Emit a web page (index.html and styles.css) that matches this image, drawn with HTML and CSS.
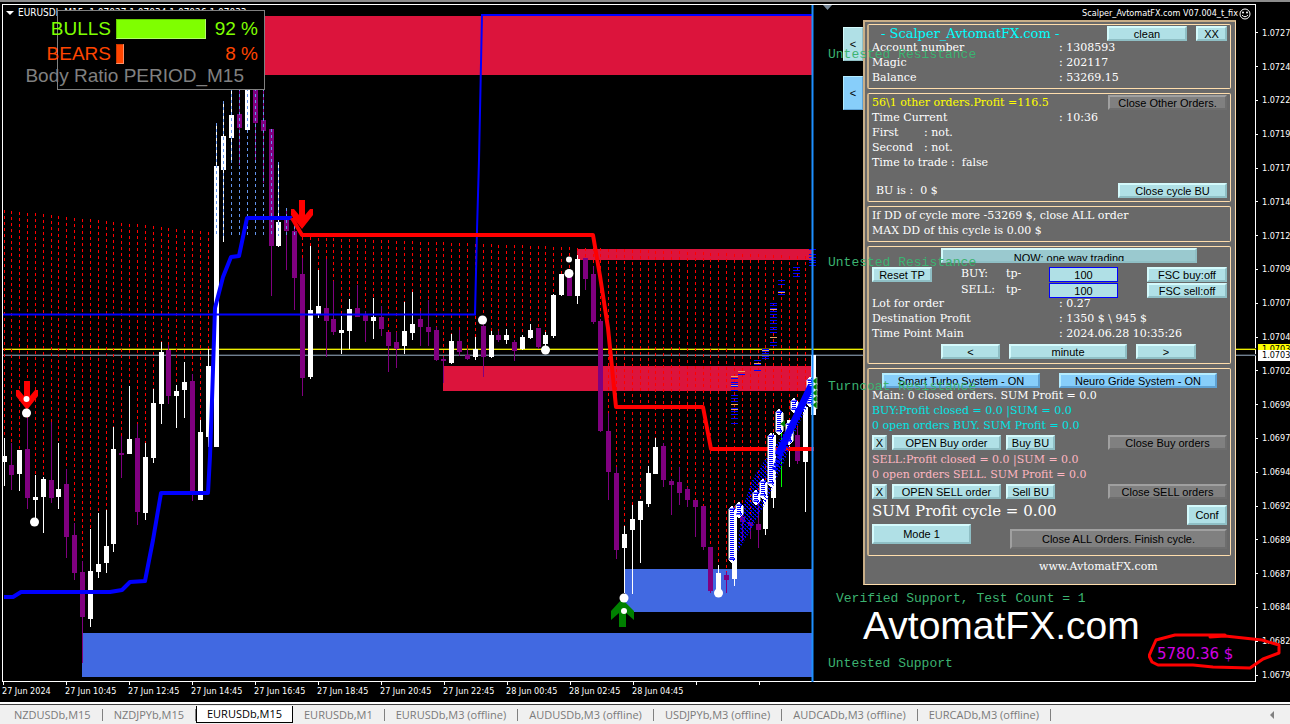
FILE: index.html
```html
<!DOCTYPE html>
<html lang="en">
<head>
<meta charset="utf-8">
<title>EURUSDb,M15</title>
<link rel="stylesheet" href="styles.css">
</head>
<body>
<main class="chart">
  <div class="plot"></div>
  <ol class="prices" id="prices"></ol>
  <ol class="times">
    <li>27 Jun 2024</li><li>27 Jun 10:45</li><li>27 Jun 12:45</li><li>27 Jun 14:45</li>
    <li>27 Jun 16:45</li><li>27 Jun 18:45</li><li>27 Jun 20:45</li><li>27 Jun 22:45</li>
    <li>28 Jun 00:45</li><li>28 Jun 02:45</li><li>28 Jun 04:45</li><li></li><li></li>
  </ol>
  <svg class="canvas" id="canvas" aria-hidden="true"></svg>

  <span class="tag tag-ask">1.07036</span>
  <span class="tag tag-bid">1.07032</span>

  <div class="symbol"><span class="symbol-arrow"></span>EURUSDb,M15&nbsp; 1.07027 1.07034 1.07026 1.07033</div>

  <section class="ratio">
    <div class="ratio-row bulls"><span class="ratio-name">BULLS</span><span class="bar"><span class="bar-fill" style="width:92%"></span></span><span class="ratio-value">92 %</span></div>
    <div class="ratio-row bears"><span class="ratio-name">BEARS</span><span class="bar"><span class="bar-fill" style="width:8%"></span></span><span class="ratio-value">8 %</span></div>
    <div class="ratio-caption">Body Ratio PERIOD_M15</div>
  </section>

  <div class="expert">Scalper_AvtomatFX.com V07.004_t_fix
    <svg width="12" height="12" viewBox="0 0 12 12"><circle cx="6" cy="6" r="5" fill="none" stroke="#fff"/><circle cx="4" cy="4.500" r="1" fill="#fff"/><circle cx="8" cy="4.500" r="1" fill="#fff"/><path d="M3 7q3 3.500 6 0" fill="none" stroke="#fff"/></svg>
  </div>

  <div class="side">
    <button class="btn side-btn">&lt;</button>
    <button class="btn blue side-btn">&lt;</button>
  </div>

  <section class="panel">
    <div class="group">
      <div class="head">
        <h1 class="title">- Scalper_AvtomatFX.com -</h1>
        <button class="btn w-clean">clean</button>
        <button class="btn w-xx">XX</button>
      </div>
      <dl class="facts">
        <dt>Account number</dt><dd>: 1308593</dd>
        <dt>Magic</dt><dd>: 202117</dd>
        <dt>Balance</dt><dd>: 53269.15</dd>
      </dl>
    </div>

    <div class="group">
      <div class="line">
        <p class="yellow">56\1 other orders.Profit =116.5</p>
        <button class="btn gray w-close">Close Other Orders.</button>
      </div>
      <dl class="facts"><dt>Time Current</dt><dd>: 10:36</dd></dl>
      <dl class="facts short">
        <dt>First</dt><dd>: not.</dd>
        <dt>Second</dt><dd>: not.</dd>
      </dl>
      <p>Time to trade :&nbsp; false</p>
      <div class="line bu">
        <p>BU is :&nbsp; 0 $</p>
        <button class="btn w-cycle">Close cycle BU</button>
      </div>
    </div>

    <div class="group">
      <p>If DD of cycle more -53269 $, close ALL order</p>
      <p>MAX DD of this cycle is 0.00 $</p>
    </div>

    <div class="group trading">
      <button class="btn now">NOW: one way trading</button>
      <div class="take">
        <button class="btn reset">Reset TP</button>
        <label for="buy-tp">BUY:</label><span>tp-</span>
        <input id="buy-tp" class="tp" value="100">
        <button class="btn fsc">FSC buy:off</button>
        <label class="sell" for="sell-tp">SELL:</label><span>tp-</span>
        <input id="sell-tp" class="tp" value="100">
        <button class="btn fsc">FSC sell:off</button>
      </div>
      <dl class="facts lot">
        <dt>Lot for order</dt><dd>: 0.27</dd>
        <dt>Destination Profit</dt><dd>: 1350 $ \ 945 $</dd>
        <dt>Time Point Main</dt><dd>: 2024.06.28 10:35:26</dd>
      </dl>
      <div class="stepper">
        <button class="btn">&lt;</button>
        <button class="btn">minute</button>
        <button class="btn">&gt;</button>
      </div>
    </div>

    <div class="group orders">
      <div class="systems">
        <button class="btn blue">Smart Turbo System - ON</button>
        <button class="btn blue">Neuro Gride System - ON</button>
      </div>
      <p>Main: 0 closed orders. SUM Profit = 0.0</p>
      <p class="cyan">BUY:Profit closed = 0.0 |SUM = 0.0</p>
      <p class="cyan">0 open orders BUY. SUM Profit = 0.0</p>
      <div class="actions">
        <button class="btn w-x">X</button>
        <button class="btn w-open">OPEN Buy order</button>
        <button class="btn w-bu">Buy BU</button>
        <button class="btn gray w-close">Close Buy orders</button>
      </div>
      <p class="pink">SELL:Profit closed = 0.0 |SUM = 0.0</p>
      <p class="pink">0 open orders SELL. SUM Profit = 0.0</p>
      <div class="actions">
        <button class="btn w-x">X</button>
        <button class="btn w-open">OPEN SELL order</button>
        <button class="btn w-bu">Sell BU</button>
        <button class="btn gray w-close">Close SELL orders</button>
      </div>
      <div class="finish">
        <div class="finish-left">
          <p class="sum">SUM Profit cycle = 0.00</p>
          <button class="btn mode">Mode 1</button>
        </div>
        <div class="finish-right">
          <button class="btn conf">Conf</button>
          <button class="btn gray all">Close ALL Orders. Finish cycle.</button>
        </div>
      </div>
    </div>
    <p class="site">www.AvtomatFX.com</p>
  </section>

  <span class="zone zone-1">Untested Resistance</span>
  <span class="zone zone-2">Untested Resistance</span>
  <span class="zone zone-3">Turncoat Resistance</span>
  <span class="zone zone-4">Verified Support, Test Count = 1</span>
  <span class="zone zone-5">Untested Support</span>
  <div class="brand">AvtomatFX.com</div>
  <div class="profit">5780.36 $</div>
  <svg class="mark" width="136" height="40" viewBox="1148 632 136 40" aria-hidden="true">
    <path d="M1226 636L1225 635L1175 635L1156 640L1152 649L1149 656L1152 662L1158 665L1193 665L1213 667L1250 668L1263 659L1279 653L1279 645L1262 640L1225 636L1210 637" fill="none" stroke="#f00" stroke-width="3" stroke-linejoin="round" stroke-linecap="round"/>
  </svg>
</main>

<nav class="tabs">
  <a class="tab" href="#">NZDUSDb,M15</a>
  <a class="tab" href="#">NZDJPYb,M15</a>
  <a class="tab active" href="#">EURUSDb,M15</a>
  <a class="tab" href="#">EURUSDb,M1</a>
  <a class="tab" href="#">EURUSDb,M3 (offline)</a>
  <a class="tab" href="#">AUDUSDb,M3 (offline)</a>
  <a class="tab" href="#">USDJPYb,M3 (offline)</a>
  <a class="tab" href="#">AUDCADb,M3 (offline)</a>
  <a class="tab" href="#">EURCADb,M3 (offline)</a>
  <span class="tabs-back"></span>
</nav>
<script src="chart.js"></script>
</body>
</html>
```
FILE: styles.css
```css
* { box-sizing: border-box; }
body {
  margin: 0;
  min-height: 100vh;
  display: flex;
  flex-direction: column;
  background: #000;
  color: #fff;
  overflow: hidden;
  font-family: "DejaVu Sans Condensed", "DejaVu Sans", sans-serif;
  font-size: 9px;
}
h1, p, dl, dd, ol { margin: 0; padding: 0; font-weight: normal; }
ol { list-style: none; }

.chart {
  position: relative;
  flex: 1;
  display: grid;
  grid-template: 1fr 20px / 1fr 34px;
  padding: 4px 0 0 2px;
  box-shadow: inset 0 2px #8c8c8c;
  overflow: hidden;
}
.plot { border: 1px solid #fff; }
.prices {
  grid-area: 1 / 2 / 3 / 3;
  display: flex;
  flex-direction: column;
  padding: 12px 0 10px;
  overflow: hidden;
}
.prices li { flex: 1; display: flex; align-items: center; gap: 4px; }
.prices li::before { content: ""; width: 2px; height: 1px; background: #fff; flex: none; }
.times { grid-area: 2 / 1; display: flex; }
.times li {
  width: 63px;
  padding-top: 2px;
  line-height: 14px;
  white-space: nowrap;
  background: linear-gradient(#fff, #fff) 1px 0 / 1px 3px no-repeat;
}
.canvas { position: absolute; inset: 0; width: 100%; height: 100%; }

.tag { position: absolute; left: 1258px; right: 0; padding-left: 4px; line-height: 11px; color: #000; overflow: hidden; }
.tag-ask { top: 344px; background: #ff0; }
.tag-bid { top: 350px; background: #fff; }

.symbol { position: absolute; left: 6px; top: 6px; display: flex; align-items: center; gap: 4px; font-size: 10px; line-height: 13px; white-space: nowrap; }
.symbol-arrow { border: 4px solid transparent; border-top-color: #fff; border-bottom: 0; }

.ratio {
  position: absolute;
  left: 57px;
  top: 10px;
  width: 208px;
  height: 80px;
  padding: 5px 6px 0 0;
  border: 1px solid #808080;
  background: #000;
  font: 19px/25px "Liberation Sans", Arial, sans-serif;
}
.ratio-row { display: flex; align-items: center; }
.ratio-name { width: 53px; display: flex; justify-content: flex-end; }
.bar { width: 98px; margin-left: 5px; height: 20px; }
.bar-fill { display: block; height: 100%; background: currentColor; box-shadow: inset -1px -1px rgba(255, 255, 255, .4), inset 1px 1px rgba(0, 0, 0, .2); }
.ratio-value { flex: 1; text-align: right; }
.bulls { color: #7fff00; }
.bears { color: #ff4500; }
.ratio-caption { color: #808080; width: 186px; display: flex; justify-content: flex-end; white-space: nowrap; line-height: 20px; }

.expert { position: absolute; right: 39px; top: 7px; display: flex; align-items: center; gap: 1px; font-size: 9px; line-height: 13px; }

.btn {
  display: block;
  height: 15px;
  padding: 0;
  border: 2px solid;
  border-color: #d4fafc #8fbfc5 #8fbfc5 #d4fafc;
  background: #b0e0e6;
  color: #000;
  font: 11px/12px "Liberation Sans", Arial, sans-serif;
  white-space: nowrap;
}
.btn.blue { background: #87cefa; border-color: #b4ecff #5fa2d4 #5fa2d4 #b4ecff; }
.btn.gray { background: #808080; border-color: #a0a0a0 #6e6e6e #6e6e6e #a0a0a0; }

.side { position: absolute; left: 843px; top: 27px; display: flex; flex-direction: column; gap: 15px; }
.side-btn { width: 20px; height: 34px; border-width: 1px; }

.panel {
  position: absolute;
  left: 863px;
  top: 20px;
  width: 373px;
  padding: 2px 4px 2px 2px;
  display: flex;
  flex-direction: column;
  gap: 4px;
  background: #696969;
  border: 2px solid #c8ae88;
  border-right: 1px solid #ffdead;
  border-bottom: 1px solid #ffdead;
  font: 11px/15px "DejaVu Serif", Georgia, serif;
}
.panel p { white-space: nowrap; }
.group { border: 1px solid #ffdead; border-left: 2px solid #c8ae88; border-radius: 2px; padding: 1px 3px 3px; }
.head { display: flex; height: 14px; gap: 9px; }
.title { flex: 1; padding-left: 9px; font-size: 13px; line-height: 15px; color: #0ff; white-space: nowrap; }
.w-clean { width: 80px; }
.w-xx { width: 31px; }
.facts { display: grid; grid-template-columns: 187px 1fr; }
.facts.short { grid-template-columns: 52px 1fr; }
.line { display: flex; justify-content: space-between; }
.yellow { color: #ff0; }
.w-close { width: 119px; }
.bu { margin-top: 13px; padding-left: 4px; }
.w-cycle { width: 109px; }
.now { width: 256px; margin: 0 auto 4px 69px; padding-top: 2px; background: #9ac9cf; overflow: hidden; }
.take { display: grid; grid-template-columns: 89px 45px 43px 69px 1fr; row-gap: 1px; line-height: 14px; }
.reset { width: 60px; }
.fsc { width: 80px; justify-self: end; }
.sell { grid-column: 2; }
.tp { width: 69px; height: 15px; padding: 0; border: 1px solid #00f; background: #b0e0e6; color: #000; font: 11px "Liberation Sans", Arial, sans-serif; text-align: center; }
.lot { margin-top: -2px; position: relative; }
.stepper { display: grid; grid-template-columns: 59px 118px 60px; gap: 9px; padding: 3px 0 0 69px; }
.trading { padding-bottom: 4px; }
.orders { padding-top: 4px; padding-bottom: 6px; }
.systems { display: flex; gap: 19px; padding-left: 10px; }
.systems .btn { width: 158px; }
.cyan { color: #00e5e5; }
.pink { color: #ffb6c1; }
.actions { display: flex; gap: 5px; margin: 2px 0; }
.actions .gray { margin-left: auto; }
.w-x { width: 15px; }
.w-open { width: 109px; }
.w-bu { width: 49px; }
.finish { display: flex; justify-content: space-between; }
.finish-left { width: 100px; }
.finish-right { display: flex; flex-direction: column; align-items: flex-end; gap: 4px; padding-top: 4px; }
.sum { font-size: 15px; line-height: 20px; }
.mode { width: 99px; height: 20px; margin-top: 3px; }
.conf { width: 40px; height: 20px; }
.all { width: 217px; height: 20px; }
.site { padding: 0 0 8px 172px; line-height: 14px; }

.zone { position: absolute; left: 828px; color: #3cb371; font: 13px/16px "Liberation Mono", "Courier New", monospace; white-space: nowrap; }
.zone-1 { top: 47px; }
.zone-2 { top: 255px; }
.zone-3 { top: 379px; }
.zone-4 { top: 591px; left: 836px; }
.zone-5 { top: 656px; }
.brand { position: absolute; left: 863px; top: 603px; font: 39px/45px "Liberation Sans", Arial, sans-serif; }
.profit { position: absolute; left: 1157px; top: 645px; color: #d000e0; font: 15px/18px "DejaVu Sans", Verdana, sans-serif; }
.mark { position: absolute; left: 1148px; top: 632px; }

.tabs { display: flex; align-items: stretch; height: 22px; padding: 2px 8px 1px 3px; background: #f0f0f0; border-top: 2px solid #fff; box-shadow: inset 0 1px #404040; }
.tab { display: flex; align-items: center; padding: 0 12px 0 11px; color: #7a7a7a; text-decoration: none; white-space: nowrap; font: 11px/14px "Open Sans", "Noto Sans", sans-serif; background: linear-gradient(#808080, #808080) right center / 1px 12px no-repeat; }
.tab.active { padding: 0 10px; background: #fff; color: #000; border: 1px solid #000; border-top: 0; }
.tabs-back { margin: auto 8px auto auto; border: 4px solid transparent; border-right-color: #808080; border-left: 0; }
```
FILE: chart.js
```js
const STEP = 7.855;
const xAt = i => 3.5 + i * STEP;

// Each bar: colour (w = rising, p = falling), high, low, body top, body bottom
const bars = `w438 486 456 462|p443 490 465 475|w450 491 450 474|p418 509 449 498|w475 522 497 500|w477 533 479 497
p422 503 480 498|w443 509 489 497|p469 558 484 537|p523 580 535 573|p561 663 572 617|w529 627 571 619
w513 578 564 572|w510 573 546 563|w427 552 449 544|p436 478 453 455|w386 454 439 454|p424 525 438 512
w443 520 457 513|w389 463 403 458|w342 424 352 404|p345 404 350 396|w385 428 391 396|w362 418 382 390
p374 501 381 492|w420 500 432 500|w349 447 366 437|w123 447 166 447|w101 242 136 170|w88 163 115 138
p88 165 114 128|w88 130 88 130|p88 163 88 123|p88 183 120 131|p129 296 129 246|w162 247 222 246
p208 270 218 231|p220 310 231 278|p258 396 274 378|w246 379 310 377|w270 318 306 314|p259 357 308 321
p281 335 319 332|w316 354 330 333|w299 349 309 331|p285 317 308 317|p311 342 315 321|w298 339 317 321
p306 336 317 329|p332 372 332 346|p332 368 342 349|w302 354 331 346|w292 340 324 333|p311 346 319 327
p300 346 327 332|p327 361 330 360|p357 383 359 361|w334 364 341 363|p330 356 341 352|p349 360 355 359
w337 360 349 357|p323 377 326 357|w331 358 335 357|p331 342 335 340|w329 344 335 340|p340 361 342 351
w335 350 337 349|w324 339 330 338|p328 349 328 347|w332 350 335 344|w294 338 295 336|w274 296 274 295
p277 296 277 296|w255 304 259 296|p258 290 258 279|p266 324 274 322|p319 432 321 431|p413 500 431 472
p467 559 473 550|w526 593 534 548|w505 594 519 530|w501 563 501 520|w466 507 473 504|w438 474 447 474
p443 487 446 480|p479 515 481 485|p467 505 482 493|p487 507 489 500|p500 537 500 507|p506 550 506 547
p547 593 547 591|w565 593 573 590|p572 593 575 580|w508 586 510 579|p510 541 517 522|p522 539 522 526
p502 548 524 530|w487 535 496 529|w433 508 435 498|g431 487 431 431|w420 467 420 432|p427 464 435 461
w400 512 407 462|w355 415 355 415`.split(/[|\n]/).map(s => [s[0], ...s.slice(1).split(' ').map(Number)]);

const colours = { w: '#fff', p: '#800080', g: '#0f0' };
const out = [];
const rect = (x, y, w, h, fill) => out.push(`<rect x="${x}" y="${y}" width="${w}" height="${h}" fill="${fill}"/>`);
const path = (d, stroke, width, extra = '') => out.push(`<path d="${d}" fill="none" stroke="${stroke}" stroke-width="${width}" ${extra}/>`);
const dot = (x, y, r) => out.push(`<circle cx="${x}" cy="${y}" r="${r}" fill="#fff"/>`);

out.push('<pattern id="mesh" width="4" height="4" patternUnits="userSpaceOnUse"><path d="M0 0h2v1h-2zM2 2h2v1h-2zM1 1h1v1h-1zM3 3h1v1h-1z" fill="#00f"/></pattern>');

// Support and resistance zones
rect(200, 16, 612, 59, '#dc143c');
rect(577, 249, 235, 11, '#dc143c');
rect(443, 366, 369, 25, '#dc143c');
rect(82, 633, 730, 44, '#4169e1');
rect(625, 569, 187, 43, '#4169e1');

// Ask and bid lines
rect(3, 348, 1253, 1, '#555500');
rect(3, 349, 1253, 1, '#eeee00');
rect(3, 354, 1253, 1, '#2c333a');
rect(3, 355, 1253, 1, '#708090');

bars.forEach(([c, hi, lo, top, bottom], i) => {
  const x = Math.round(xAt(i));
  const start = i < 27 ? 210 + i * 0.85 : 237 + (i - 38) * 0.3;
  if ((i < 27 || i > 37) && i < 103) {
    const end = i > 92 ? Math.min(hi, 520) : hi;
    path(`M${x + .5} ${Math.round(start)}V${end}`, '#f00', 1, 'stroke-dasharray="3 3"');
  }
  rect(x, hi, 1, lo - hi, colours[c]);
  rect(x - 2, top, 5, bottom - top, colours[c]);
});
for (let i = 27; i < 38; i++) path(`M${Math.round(xAt(i)) + .5} ${bars[i][1]}V236`, '#6495ed', 1, 'stroke-dasharray="3 3"');

// Indicator lines
path('M3 314.500H475L477 230L479 160L482 15H812', '#00f', 2);
path('M4 597H13L21 592H110L122 590L130 582L145 581L153 540L161 493H208L210 456L212 400L215 308L223 277L231 257L239 256L247 218H292', '#00f', 4, 'stroke-linejoin="round"');
path('M292 218L302 235H593L600 276L608 328L616 407H703L711 449H814', '#f00', 4, 'stroke-linejoin="round"');

// Price levels
const levels = {
  735: [376, 378, 382, 384, 386, 390, 395, 398, 401, 404, 408, 411, 414, 418, 423], 742: [371, 374],
  758: [360, 364, 370], 766: [349, 351, 353, 356, 358],
  774: [303, 305, 308, 311, 314, 317, 320, 323, 327, 329, 332, 337, 342, 345], 782: [280, 284, 291, 294],
  797: [267, 270, 273, 276], 813: [249, 254, 257, 260, 262, 265]
};
Object.entries(levels).forEach(([x, ys]) => ys.forEach(y => rect(x - 4, y, 7, 1, '#0000ff')));
[[735, 376], [735, 385], [735, 404], [735, 409], [742, 371], [758, 363], [766, 350], [774, 309], [774, 337], [782, 292]]
  .forEach(([x, y]) => rect(x - 4, y, 7, 1, '#f0a060'));

// Trade history: connecting lines, then columns of arrows
out.push('<path d="M737 553L742 510L752 480L770 452L790 425L812 380V396L796 430L784 462L768 498L752 528z" fill="url(#mesh)"/>');
const columns = [[732, 509, 560], [739, 505, 515], [756, 493, 502], [763, 482, 496], [771, 436, 484], [779, 412, 432], [789, 424, 442], [794, 401, 410], [810, 380, 404]];
columns.forEach(([x, a, b]) => {
  path(`M${x - 3} ${a}L${x} ${a - 3}L${x + 4} ${a + 1}V${b - 1}L${x} ${b + 3}L${x - 3} ${b}z`, '#fff', 1, 'style="fill:#fff"');
  path(`M${x} ${a}V${b}`, '#00f', 4, 'stroke-dasharray="1 1"');
  [a, b - 1].forEach(y => path(`M${x - 3} ${y}h6m-2 -2l2 2l-2 2`, '#00f', 1));
});
path('M778 455L811 386', '#00f', 7);
path('M774 470L806 396', '#00f', 5, 'stroke-dasharray="3 1"');
for (let y = 378; y < 408; y += 6) out.push(`<path d="M812 ${y + 3}l5 -4v8z" fill="#008000" stroke="#fff" stroke-width=".5"/>`);
out.push('<path d="M780 424l5 -4v7z" fill="#008000"/>');
path('M812.500 5V682', '#1e90ff', 2);

// Signal arrows and extremes
const down = (x, y) => out.push(`<path d="M${x - 3} ${y}h6v15l5 -6h3v6l-11 14l-11 -14v-6h3l5 6z" fill="#f00"/>`);
down(27, 381);
down(302, 200);
out.push('<path d="M622 599l12 12v9l-8 -7v14h-7v-14l-8 7v-9z" fill="#008000"/>');
[[26.5, 413, 4.5], [26.5, 399, 3], [34.5, 522, 4.5], [482.5, 320, 4.5], [545.5, 350, 4.5], [569, 259.5, 3], [569, 273.5, 4.5], [624, 598, 4.5], [624, 611, 3], [718.5, 593, 4.5]]
  .forEach(d => dot(...d));
out.push('<path d="M823 5h9l-4.500 5z" fill="#778899"/>');
document.getElementById('canvas').innerHTML = out.join('');

const prices = document.getElementById('prices');
for (let p = 107270; p >= 106795; p -= 25) {
  const li = document.createElement('li');
  li.textContent = (p / 100000).toFixed(5);
  prices.append(li);
}
```
